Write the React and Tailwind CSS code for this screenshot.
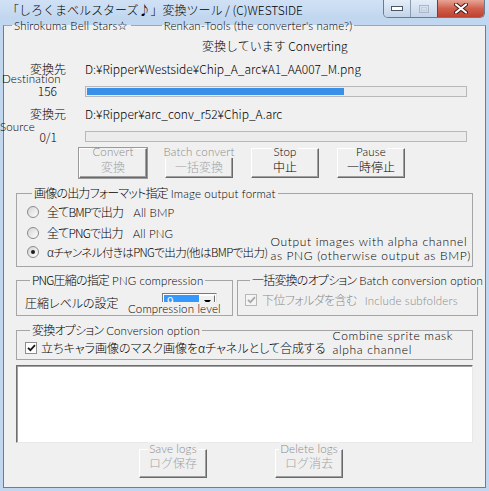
import React from "react";

// English note text laid over the dialog
const EN = "font-['Lato','Liberation_Sans',sans-serif] text-[11.5px] leading-[13px] font-light tracking-[0.15px]";
// the two-line notes are set a little looser
const EN_WIDE = "font-['Lato','Liberation_Sans',sans-serif] text-[12px] leading-[14px] font-light tracking-[0.65px]";

function Legend({ ja, en }) {
  return (
    <legend className="ml-[5px] px-[2px] h-[14px] flex items-center whitespace-nowrap">
      <span className="leading-[14px] tracking-[-0.8px]">{ja}</span>
      {en && <span className={`${EN} ml-[3px]`}>{en}</span>}
    </legend>
  );
}

function WinButton({ en, ja, disabled, isDefault, bottom }) {
  return (
    <div
      className={`w-[68px] flex flex-col items-center bg-[#f0f0f0] border border-t-white border-l-white border-r-[#696969] border-b-[#696969] shadow-[inset_-1px_-1px_0_#a0a0a0] ${
        bottom ? "h-[29px]" : "h-[30px]"
      } ${isDefault ? "outline outline-[#9a9a9a]" : ""}`}
    >
      <span
        className={`${EN} leading-[12px] px-[1px] bg-[#f0f0f0] whitespace-nowrap ${bottom ? "-mt-[8px]" : "-mt-[4px]"} ${
          disabled ? "text-[#8a8a8a]" : "text-black"
        }`}
      >
        {en}
      </span>
      <span
        className={`text-[12px] leading-[14px] whitespace-nowrap ${bottom ? "mt-[1px]" : "mt-[2px]"} ${
          disabled ? "text-[#a3a3a3]" : "text-black"
        }`}
      >
        {ja}
      </span>
    </div>
  );
}

function Radio({ checked }) {
  return (
    <span className="w-[12px] h-[12px] shrink-0 rounded-full border border-[#8a8a8a] bg-gradient-to-br from-[#d4d4d4] to-white flex items-center justify-center">
      {checked && <span className="w-[4px] h-[4px] rounded-full bg-[#1c1c1c]" />}
    </span>
  );
}

function CheckBox({ checked, disabled }) {
  return (
    <span
      className={`w-[12px] h-[12px] shrink-0 flex items-center justify-center border ${
        disabled ? "border-[#b8b8b8] bg-[#f4f4f4]" : "border-[#8e8e8e] bg-white"
      }`}
    >
      {checked && (
        <svg width="9" height="8" viewBox="0 0 9 8">
          <path
            d="M1 3.8 L3.4 6.2 L8 1.2"
            stroke={disabled ? "#a9a9a9" : "#1a1a1a"}
            strokeWidth="1.8"
            fill="none"
          />
        </svg>
      )}
    </span>
  );
}

function Progress({ fill }) {
  return (
    <div className="w-[382px] h-[11px] border border-[#b8b8b8] bg-[#ececec] p-[1px]">
      {fill > 0 && <div className="h-full bg-[#3a8fe8]" style={{ width: `${fill * 100}%` }} />}
    </div>
  );
}

function CaptionButtons() {
  return (
    <div className="ml-auto mr-[4px] flex h-[18px] border border-t-0 border-[#6a7b8f] rounded-b-[5px] overflow-hidden">
      <div className="w-[27px] bg-gradient-to-b from-[#e4edf8] to-[#c3d4e9] border-r border-[#8a9bb0] flex items-center justify-center">
        <svg width="12" height="5" viewBox="0 0 12 5">
          <rect x="0.5" y="0.5" width="11" height="4" fill="#fff" stroke="#4a5566" />
        </svg>
      </div>
      <div className="w-[27px] bg-gradient-to-b from-[#e4edf8] to-[#c3d4e9] border-r border-[#7c3a34] flex items-center justify-center">
        <svg width="10" height="8" viewBox="0 0 10 8">
          <rect x="0.5" y="0.5" width="9" height="7" fill="none" stroke="#aab6c6" />
          <rect x="2.5" y="2.5" width="5" height="3" fill="none" stroke="#c3ccd8" />
        </svg>
      </div>
      <div className="w-[46px] bg-gradient-to-b from-[#e8a496] via-[#d0604e] to-[#c0412f] flex items-center justify-center">
        <svg width="14" height="11" viewBox="0 0 14 11">
          <path d="M2 1.5 L12 9.5 M12 1.5 L2 9.5" stroke="#3d1a16" strokeWidth="4" strokeLinecap="round" />
          <path d="M2 1.5 L12 9.5 M12 1.5 L2 9.5" stroke="#fff" strokeWidth="2.2" strokeLinecap="round" />
        </svg>
      </div>
    </div>
  );
}

export default function App() {
  return (
    <div className="w-[489px] h-[491px] flex flex-col bg-[#c1d7ef] overflow-hidden font-['Noto_Sans_CJK_JP','Liberation_Sans',sans-serif] font-light text-[12px] text-black">
      {/* title bar */}
      <div className="h-[18px] shrink-0 flex items-start bg-gradient-to-b from-[#d0e1f5] to-[#c1d7ef]">
        <div className="pl-[7px] pt-[3px] leading-[14px] whitespace-nowrap">
          「しろくまベルスターズ♪」変換ツール / (C)WESTSIDE
        </div>
        <CaptionButtons />
      </div>

      {/* client area */}
      <fieldset className="flex-1 min-h-0 min-w-0 mx-[3px] mb-[3px] bg-[#f0f0f0] border border-t-[#a5a5a5] border-x-[#6f7e8f] border-b-[#6f7e8f]">
        <legend className="ml-[8px] px-[2px] h-[14px] flex items-center whitespace-nowrap">
          <span className={EN}>Shirokuma Bell Stars☆</span>
          <span className="w-[31px] h-px bg-[#a5a5a5] mx-[2px]" />
          <span className={EN}>Renkan-Tools (the converter's name?)</span>
        </legend>

        <div className="mt-[7px] pl-[198px] leading-[14px] whitespace-nowrap">変換しています Converting</div>

        {/* destination */}
        <div className="relative mt-[9px] flex items-center h-[14px]">
          <div className="w-[81px] pr-[19px] text-right leading-[14px]">変換先</div>
          <div className="leading-[14px] whitespace-nowrap">D:¥Ripper¥Westside¥Chip_A_arc¥A1_AA007_M.png</div>
          <span className={`${EN} absolute left-[-2px] top-[10px] text-black`}>Destination</span>
        </div>
        <div className="mt-[9px] flex items-center h-[12px]">
          <div className="w-[81px] pr-[28px] text-right leading-[12px]">156</div>
          <Progress fill={0.68} />
        </div>

        {/* source */}
        <div className="relative mt-[10px] flex items-center h-[14px]">
          <div className="w-[81px] pr-[19px] text-right leading-[14px]">変換元</div>
          <div className="leading-[14px] whitespace-nowrap">D:¥Ripper¥arc_conv_r52¥Chip_A.arc</div>
          <span className={`${EN} absolute left-[-4px] top-[13px] text-black`}>Source</span>
        </div>
        <div className="mt-[9px] flex items-center h-[12px]">
          <div className="w-[81px] pr-[28px] text-right leading-[12px] pt-[2px]">0/1</div>
          <Progress fill={0} />
        </div>

        {/* action buttons */}
        <div className="mt-[6px] pl-[75px] flex gap-[18px]">
          <WinButton en="Convert" ja="変換" disabled isDefault />
          <WinButton en="Batch convert" ja="一括変換" disabled />
          <WinButton en="Stop" ja="中止" />
          <WinButton en="Pause" ja="一時停止" />
        </div>

        <div className="[font-feature-settings:'palt']">
          {/* output format */}
          <fieldset className="min-w-0 mt-[8px] mx-[12px] pl-[10px] pb-[7px] border border-[#a5a5a5]">
            <Legend ja="画像の出力フォーマット指定" en="Image output format" />
            <div className="mt-[5px] h-[14px] flex items-center">
              <Radio />
              <span className="ml-[8px] leading-[14px] tracking-[-0.8px]">全てBMPで出力</span>
              <span className={`${EN} ml-[10px]`}>All BMP</span>
            </div>
            <div className="mt-[7px] h-[14px] flex items-center">
              <Radio />
              <span className="ml-[8px] leading-[14px] tracking-[-0.8px]">全てPNGで出力</span>
              <span className={`${EN} ml-[10px]`}>All PNG</span>
            </div>
            <div className="mt-[5px] h-[14px] flex items-center">
              <Radio checked />
              <span className="ml-[8px] leading-[14px] whitespace-nowrap text-[11.5px] tracking-[-0.6px]">
                αチャンネル付きはPNGで出力(他はBMPで出力)
              </span>
              <div className={`${EN_WIDE} ml-[3px] -mt-[6px] whitespace-nowrap`}>
                <div>Output images with alpha channel</div>
                <div>as PNG (otherwise output as BMP)</div>
              </div>
            </div>
          </fieldset>

          <div className="mt-[6px] ml-[12px] flex gap-[4px]">
            {/* PNG compression */}
            <fieldset className="min-w-0 w-[217px] pl-[8px] pb-[2px] border border-[#a5a5a5]">
              <Legend ja="PNG圧縮の指定" en="PNG compression" />
              <div className="relative mt-[6px] h-[20px] flex items-center">
                <span className="w-[137px] leading-[14px]">圧縮レベルの設定</span>
                <div className="w-[55px] h-[20px] border border-t-[#7a7a7a] border-l-[#7a7a7a] border-b-[#e3e3e3] border-r-[#e3e3e3] bg-white flex items-start p-[1px]">
                  <span className="w-[35px] h-[12px] bg-[#3399ff] text-white text-[12px] leading-[12px] pl-[3px] font-normal">9</span>
                  <span className="ml-auto w-[16px] h-[14px] bg-[#f0f0f0] border border-t-white border-l-white border-r-[#696969] border-b-[#696969] flex items-center justify-center">
                    <svg width="7" height="4" viewBox="0 0 7 4">
                      <path d="M0 0 H7 L3.5 4 Z" fill="#000" />
                    </svg>
                  </span>
                </div>
                <span className={`${EN} absolute left-[103px] top-[9px] bg-[#f0f0f0] pr-[1px] whitespace-nowrap`}>
                  Compression level
                </span>
              </div>
            </fieldset>

            {/* batch options */}
            <fieldset className="min-w-0 w-[241px] pl-[7px] pb-[2px] border border-[#a5a5a5]">
              <Legend ja="一括変換のオプション" en="Batch conversion option" />
              <div className="mt-[6px] h-[14px] flex items-center text-[#8c8c8c]">
                <CheckBox checked disabled />
                <span className="ml-[5px] leading-[14px] whitespace-nowrap tracking-[-0.6px]">下位フォルダを含む</span>
                <span className={`${EN} ml-[8px] whitespace-nowrap`}>Include subfolders</span>
              </div>
              <div className="h-[6px]" />
            </fieldset>
          </div>

          {/* conversion options */}
          <fieldset className="min-w-0 mt-[7px] mx-[12px] pl-[8px] pb-[4px] border border-[#a5a5a5]">
            <Legend ja="変換オプション" en="Conversion option" />
            <div className="mt-[4px] h-[14px] flex items-center">
              <CheckBox checked />
              <span className="ml-[4px] leading-[14px] whitespace-nowrap">立ちキャラ画像のマスク画像をαチャネルとして合成する</span>
              <div className={`${EN_WIDE} ml-[7px] -mt-[10px] whitespace-nowrap leading-[13px]`}>
                <div>Combine sprite mask</div>
                <div>alpha channel</div>
              </div>
            </div>
          </fieldset>
        </div>

        {/* log */}
        <div className="mt-[5px] mx-[12px] h-[78px] bg-white border border-t-[#6e6e6e] border-l-[#6e6e6e] border-b-[#e8e8e8] border-r-[#e8e8e8] shadow-[inset_1px_1px_0_#a0a0a0]" />

        <div className="mt-[6px] ml-[135px] flex gap-[68px]">
          <WinButton en="Save logs" ja="ログ保存" disabled bottom />
          <WinButton en="Delete logs" ja="ログ消去" disabled bottom />
        </div>
      </fieldset>
    </div>
  );
}
